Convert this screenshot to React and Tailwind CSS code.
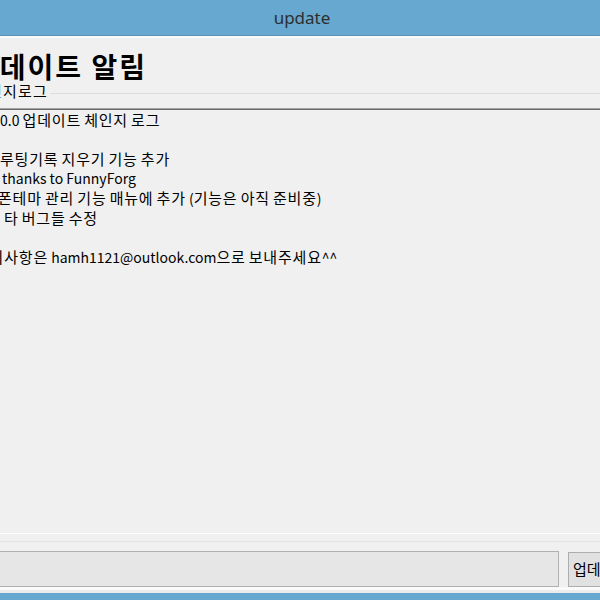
import React from "react";

const kr = { fontFamily: '"Noto Sans CJK KR", "Noto Sans", sans-serif' };

const lines = [
  { text: "0.0 업데이트 체인지 로그", indent: "ml-0" },
  { text: "\u00a0", indent: "ml-0" },
  { text: "루팅기록 지우기 기능 추가", indent: "ml-0" },
  { text: "thanks to FunnyForg", indent: "ml-[2px]" },
  { text: "폰테마 관리 기능 매뉴에 추가 (기능은 아직 준비중)", indent: "-ml-[2px]" },
  { text: "타 버그들 수정", indent: "ml-[4px]" },
  { text: "\u00a0", indent: "ml-0" },
  { text: "문의사항은 hamh1121@outlook.com으로 보내주세요^^", indent: "-ml-[25px]" },
];

// hangul runs are a little wider than the latin ones in the original font
function LogLine({ text }) {
  return text.split(/([가-힣]+)/).map((part, i) =>
    /[가-힣]/.test(part) ? (
      <span key={i} className="text-[15px] tracking-[0.8px]">
        {part}
      </span>
    ) : (
      <span key={i}>{part}</span>
    )
  );
}

export default function App() {
  return (
    <div className="w-[600px] h-[600px] overflow-hidden bg-[#f0f0f0] flex flex-col" style={kr}>
      {/* title bar */}
      <div className="h-[35px] flex-none bg-[#66a8cf] flex items-center justify-center pl-[4px]">
        <span
          className="text-[17px] text-[#2e2e2e]"
          style={{ fontFamily: '"Noto Sans", "Open Sans", sans-serif' }}
        >
          update
        </span>
      </div>
      <div className="h-px flex-none bg-[#5a93b5]" />
      <div className="h-[2px] flex-none bg-[#fbfbfb]" />

      {/* heading */}
      <div className="mt-[12px] h-[32px] flex-none leading-[32px] whitespace-nowrap -ml-[28px] text-[28px] font-bold tracking-[2px] text-black">
        업데이트 알림
      </div>

      {/* group label */}
      <div className="mt-px h-[16px] flex-none flex items-start">
        <span className="flex-none leading-[16px] text-[15px] tracking-[1.2px] whitespace-nowrap -ml-[27px] text-black">
          체인지로그
        </span>
        <div className="flex-1 h-px bg-[#dcdcdc] mt-[10px] ml-[2px]" />
      </div>

      {/* change log box */}
      <div className="mt-[9px] h-[426px] flex-none border-t border-[#a3a3a3] border-b border-b-white">
        <div className="h-full border-t border-[#6b6b6b] overflow-hidden">
          <div className="text-[14px] leading-[19px] text-black">
            {lines.map((l, i) => (
              <div key={i} className={`whitespace-nowrap ${l.indent}`}>
                <LogLine text={l.text} />
              </div>
            ))}
          </div>
        </div>
      </div>

      <div className="mt-[7px] h-px flex-none bg-[#e4e4e4]" />

      {/* input row */}
      <div className="mt-[9px] h-[36px] flex-none flex">
        <div className="flex-none w-[561px] -ml-[2px] h-[36px] bg-[#e6e6e6] border border-[#b0b0b0]" />
        <div className="flex-none w-[60px] ml-[9px] mt-px h-[35px] bg-[#e1e1e1] border border-[#adadad] flex items-center pl-[4px] whitespace-nowrap overflow-hidden">
          <span className="text-[15px] text-black">업데이트</span>
        </div>
      </div>
      <div className="h-[3px] flex-none bg-[#fafafa]" />
      <div className="h-[3px] flex-none bg-[#ececec]" />
      <div className="flex-1 bg-[#66a8cf]" />
    </div>
  );
}
